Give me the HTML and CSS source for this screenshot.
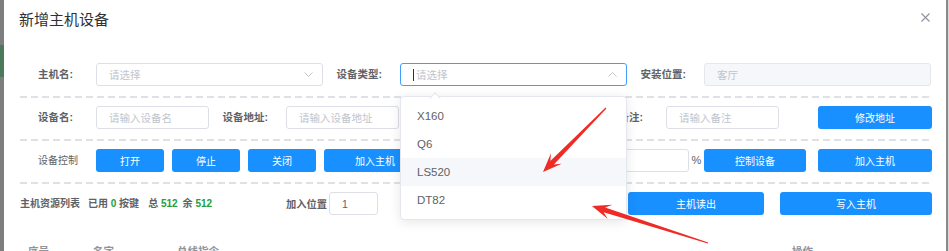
FILE: index.html
```html
<!DOCTYPE html>
<html lang="zh-CN">
<head>
<meta charset="utf-8">
<title>新增主机设备</title>
<link rel="stylesheet" href="styles.css">
</head>
<body>
<div class="screen">
  <div class="backdrop-left"></div>
  <div class="dialog">
    <div class="dialog-header">
      <span class="title">新增主机设备</span>
      <svg class="close" width="9" height="9" viewBox="0 0 9 9"><path d="M0.5 0.5L8.5 8.5M8.5 0.5L0.5 8.5" stroke="#909399" stroke-width="1.1" fill="none"/></svg>
    </div>
    <div class="form">
      <div class="row row-main">
        <div class="item">
          <span class="lbl lbl-far">主机名:</span>
          <div class="input"><span class="ph">请选择</span><svg class="chev" width="9" height="5" viewBox="0 0 9 5"><polyline points="0.5,0.5 4.5,4.5 8.5,0.5" fill="none" stroke="#c0c4cc" stroke-width="1"/></svg></div>
        </div>
        <div class="item">
          <span class="lbl">设备类型:</span>
          <div class="input is-focus"><span class="caret"></span><span class="ph">请选择</span><svg class="chev" width="9" height="5" viewBox="0 0 9 5"><polyline points="0.5,4.5 4.5,0.5 8.5,4.5" fill="none" stroke="#c0c4cc" stroke-width="1"/></svg></div>
        </div>
        <div class="item">
          <span class="lbl">安装位置:</span>
          <div class="input is-disabled"><span class="ph">客厅</span></div>
        </div>
      </div>
      <div class="sep"></div>
      <div class="row row-detail">
        <div class="item">
          <span class="lbl lbl-far">设备名:</span>
          <div class="input"><span class="ph">请输入设备名</span></div>
        </div>
        <div class="item">
          <span class="lbl">设备地址:</span>
          <div class="input"><span class="ph">请输入设备地址</span></div>
        </div>
        <div class="item">
          <span class="lbl"></span>
          <div class="input"></div>
        </div>
        <div class="item">
          <span class="lbl lbl-far">备注:</span>
          <div class="input"><span class="ph">请输入备注</span></div>
        </div>
        <div class="btn btn-lg btn-end">修改地址</div>
      </div>
      <div class="sep"></div>
      <div class="row row-ctrl">
        <span class="lbl lbl-plain">设备控制</span>
        <div class="btn btn-sm">打开</div>
        <div class="btn btn-sm">停止</div>
        <div class="btn btn-sm">关闭</div>
        <div class="btn btn-md">加入主机</div>
        <span class="lbl lbl-short"></span>
        <div class="input input-level"></div>
        <span class="pct">%</span>
        <div class="btn btn-md">控制设备</div>
        <div class="btn btn-lg btn-gap">加入主机</div>
      </div>
      <div class="sep"></div>
      <div class="row row-res">
        <span class="res"><span>主机资源列表</span><span class="res-used">已用 <b class="num">0</b> 按键</span><span class="res-total">总 <b class="num">512</b></span><span class="res-left">余 <b class="num">512</b></span></span>
        <span class="pos-label">加入位置</span>
        <div class="input input-pos"><span>1</span></div>
        <div class="btn btn-read">主机读出</div>
        <div class="btn btn-write">写入主机</div>
      </div>
      <div class="thead">
        <span class="th-no">序号</span>
        <span class="th-name">名字</span>
        <span class="th-cmd">总线指令</span>
        <span>操作</span>
      </div>
    </div>
  </div>
  <div class="backdrop-right"></div>

  <div class="dropdown">
    <div class="option">X160</div>
    <div class="option">Q6</div>
    <div class="option is-hover">LS520</div>
    <div class="option">DT82</div>
  </div>

  <svg class="annot" width="949" height="251" viewBox="0 0 949 251">
    <polygon fill="#ee2b25" points="606.43,108.42 553.90,164.48 561.68,163.72 543,172 550.98,153.20 550.34,160.98 605.57,107.58"/>
    <polygon fill="#ee2b25" points="708.18,242.43 605.14,207.57 612.38,204.63 592,206 607.82,218.91 603.62,212.33 707.82,243.57"/>
  </svg>
</div>
</body>
</html>
```

FILE: styles.css
```css
body {
  margin: 0;
  font-family: "Liberation Sans", "Noto Sans CJK SC", sans-serif;
  overflow: hidden;
}

.screen {
  position: relative;
  display: flex;
  width: 949px;
  height: 251px;
  overflow: hidden;
  background: #fff;
}

.backdrop-left {
  width: 4px;
  flex: none;
  background: linear-gradient(to bottom, #7e7e7e 0 45px, #4b7a5a 45px 77px, #7e7e7e 77px);
}

.backdrop-right {
  width: 3px;
  flex: none;
  background: linear-gradient(to right, #8a8a8a 0 2px, #d8d8d8 2px);
}

.dialog {
  width: 942px;
  flex: none;
  background: #fff;
}

.dialog-header {
  display: flex;
  justify-content: space-between;
  align-items: flex-start;
  height: 30px;
  box-sizing: border-box;
  padding: 10px 16px 0 15px;
}

.title {
  font-size: 15px;
  line-height: 20px;
  color: #303133;
}

.close {
  margin-top: 3px;
}

.form {
  margin-top: 33px;
  padding: 0 14px 0 16px;
}

.row {
  height: 23px;
}

.row-main {
  display: grid;
  grid-template-columns: repeat(3, 304px);
}

.row-detail {
  display: grid;
  grid-template-columns: repeat(4, 190px) 152px;
}

.row-ctrl {
  display: flex;
}

.row-res {
  display: flex;
  align-items: center;
}

.item {
  display: flex;
  min-width: 0;
}

.lbl {
  width: 76px;
  flex: none;
  box-sizing: border-box;
  padding-right: 18px;
  text-align: right;
  font-size: 10.5px;
  font-weight: bold;
  color: #606266;
  line-height: 23px;
  white-space: nowrap;
}

.lbl-far {
  padding-right: 23px;
}

.lbl-plain {
  font-weight: normal;
  font-size: 10px;
}

.lbl-short {
  width: 50px;
  padding-right: 8px;
}

.input {
  flex: 1;
  min-width: 0;
  margin-right: 1px;
  height: 23px;
  box-sizing: border-box;
  border: 1px solid #dcdfe6;
  border-radius: 3px;
  padding: 0 9px 0 12px;
  display: flex;
  align-items: center;
  font-size: 10.5px;
  color: #606266;
  background: #fff;
  overflow: hidden;
}

.ph {
  color: #c0c4cc;
  white-space: nowrap;
}

.is-focus {
  border-color: #409eff;
}

.is-disabled {
  background: #f5f7fa;
  border-color: #e4e7ed;
}

.caret {
  width: 1px;
  height: 12px;
  flex: none;
  background: #303133;
  margin-right: 2px;
}

.chev {
  margin-left: auto;
  flex: none;
}

.sep {
  height: 2px;
  margin: 10px 0 8px;
  background-image: repeating-linear-gradient(to right, #dfe1e6 0 7px, transparent 7px 11px);
}

.btn {
  height: 23px;
  box-sizing: border-box;
  border-radius: 3px;
  background: #1890ff;
  color: #fff;
  font-size: 10px;
  display: flex;
  align-items: center;
  justify-content: center;
  flex: none;
  white-space: nowrap;
}

.btn-sm {
  width: 68px;
  margin-right: 8px;
}

.btn-md {
  width: 102px;
}

.btn-lg {
  width: 114px;
}

.btn-end {
  justify-self: end;
}

.btn-gap {
  margin-left: 12px;
}

.input-level {
  flex: none;
  width: 213px;
  margin-right: 0;
}

.pct {
  width: 15px;
  flex: none;
  text-align: center;
  font-size: 11px;
  color: #606266;
  line-height: 23px;
}

.res {
  width: 266px;
  flex: none;
  font-size: 10px;
  font-weight: bold;
  color: #606266;
  white-space: nowrap;
  line-height: 23px;
}

.res-used {
  margin-left: 8px;
}

.res-total {
  margin-left: 9px;
}

.res-left {
  margin-left: 5px;
}

.num {
  color: #22a03a;
}

.pos-label {
  width: 43px;
  flex: none;
  font-size: 10.25px;
  font-weight: bold;
  color: #606266;
  white-space: nowrap;
}

.input-pos {
  flex: none;
  width: 49px;
  margin-right: 0;
}

.btn-read {
  width: 136px;
  margin-left: auto;
}

.btn-write {
  width: 152px;
  margin-left: 16px;
}

.thead {
  display: flex;
  margin-top: 31px;
  padding-left: 8px;
  font-size: 10.5px;
  line-height: 11px;
  color: #909399;
  font-weight: bold;
  white-space: nowrap;
}

.th-no {
  width: 65px;
}

.th-name {
  width: 84px;
}

.th-cmd {
  width: 615px;
}

.dropdown {
  position: absolute;
  left: 400px;
  top: 96px;
  width: 227px;
  box-sizing: border-box;
  border: 1px solid #e4e7ed;
  border-radius: 4px;
  background: #fff;
  box-shadow: 0 2px 12px rgba(0, 0, 0, 0.1);
  padding: 5px 0;
}

.dropdown::before {
  content: "";
  position: absolute;
  left: 30px;
  top: -3px;
  width: 7px;
  height: 7px;
  background: #fff;
  border-top: 1px solid #e4e7ed;
  border-left: 1px solid #e4e7ed;
  transform: rotate(45deg);
}

.option {
  height: 28px;
  line-height: 28px;
  padding-left: 16px;
  font-size: 11.5px;
  color: #606266;
}

.option.is-hover {
  background: #f5f7fa;
}

.annot {
  position: absolute;
  left: 0;
  top: 0;
  pointer-events: none;
}
```
